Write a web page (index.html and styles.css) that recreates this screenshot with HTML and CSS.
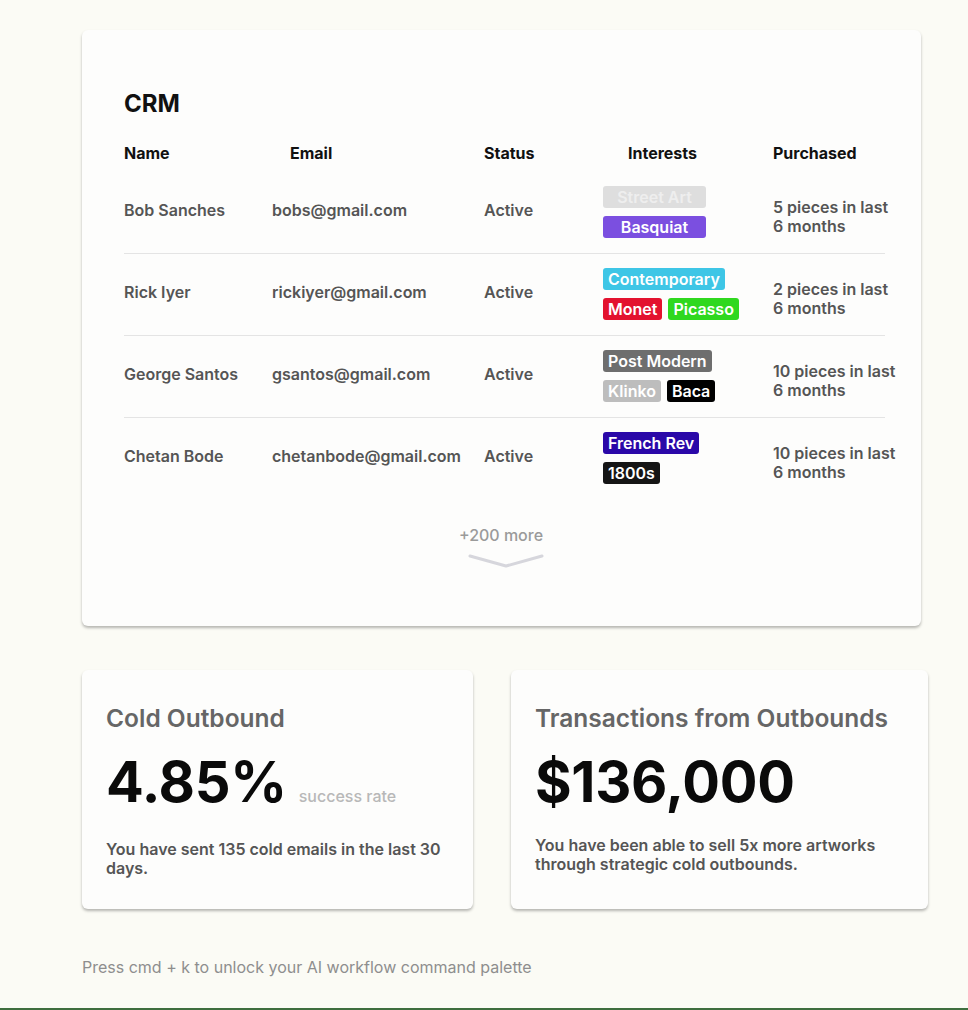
FILE: index.html
```html
<!DOCTYPE html>
<html lang="en">
<head>
<meta charset="utf-8">
<title>CRM</title>
<link rel="stylesheet" href="styles.css">
</head>
<body>
<div class="page">
  <main class="main">
    <section class="card crm">
      <h1 class="crm-title">CRM</h1>
      <div class="table">
        <div class="thead">
          <div class="th">Name</div>
          <div class="th th-email">Email</div>
          <div class="th">Status</div>
          <div class="th th-interests">Interests</div>
          <div class="th">Purchased</div>
        </div>
        <div class="row">
          <div class="cell">Bob Sanches</div>
          <div class="cell">bobs@gmail.com</div>
          <div class="cell">Active</div>
          <div class="cell tags">
            <span class="tag tag-wide t-faint">Street Art</span>
            <span class="tag tag-wide t-purple">Basquiat</span>
          </div>
          <div class="cell purchased">5 pieces in last 6 months</div>
        </div>
        <div class="row">
          <div class="cell">Rick Iyer</div>
          <div class="cell">rickiyer@gmail.com</div>
          <div class="cell">Active</div>
          <div class="cell tags">
            <span class="tag t-cyan">Contemporary</span>
            <span class="tag-line"><span class="tag t-red">Monet</span><span class="tag t-green">Picasso</span></span>
          </div>
          <div class="cell purchased">2 pieces in last 6 months</div>
        </div>
        <div class="row">
          <div class="cell">George Santos</div>
          <div class="cell">gsantos@gmail.com</div>
          <div class="cell">Active</div>
          <div class="cell tags">
            <span class="tag t-gray">Post Modern</span>
            <span class="tag-line"><span class="tag t-light">Klinko</span><span class="tag t-black">Baca</span></span>
          </div>
          <div class="cell purchased">10 pieces in last 6 months</div>
        </div>
        <div class="row row-last">
          <div class="cell">Chetan Bode</div>
          <div class="cell">chetanbode@gmail.com</div>
          <div class="cell">Active</div>
          <div class="cell tags">
            <span class="tag t-indigo">French Rev</span>
            <span class="tag t-dark">1800s</span>
          </div>
          <div class="cell purchased">10 pieces in last 6 months</div>
        </div>
      </div>
      <div class="more">+200 more</div>
      <svg class="chevron" width="76" height="16" viewBox="0 0 76 16" aria-hidden="true">
        <path d="M2 3 L38 13 L74 3" fill="none" stroke="#d6d6dc" stroke-width="3" stroke-linecap="round" stroke-linejoin="round"/>
      </svg>
    </section>

    <div class="stats">
      <section class="card stat stat-left">
        <h2 class="stat-title">Cold Outbound</h2>
        <div class="stat-value-row">
          <span class="stat-value">4.85%</span>
          <span class="stat-unit">success rate</span>
        </div>
        <p class="stat-text stat-text-left">You have sent 135 cold emails in the last 30 days.</p>
      </section>
      <section class="card stat stat-right">
        <h2 class="stat-title">Transactions from Outbounds</h2>
        <div class="stat-value-row">
          <span class="stat-value">$136,000</span>
        </div>
        <p class="stat-text">You have been able to sell 5x more artworks through strategic cold outbounds.</p>
      </section>
    </div>

    <p class="hint">Press cmd + k to unlock your AI workflow command palette</p>
  </main>
  <div class="bottom-bar"></div>
</div>
</body>
</html>
```

FILE: styles.css
```css
* { box-sizing: border-box; }

html, body {
  margin: 0;
  padding: 0;
  height: 100%;
}

body {
  background: #fbfbf5;
  font-family: Inter, "Noto Sans", "Liberation Sans", sans-serif;
  color: #555;
}

.page {
  min-height: 100%;
  display: flex;
  flex-direction: column;
}

.main {
  flex: 1;
  padding: 30px 0 0 82px;
}

.card {
  background: #fdfdfc;
  border-radius: 6px;
  box-shadow: 0 2px 3px rgba(0, 0, 0, 0.28);
}

/* CRM card */
.crm {
  width: 839px;
  height: 596px;
  padding: 59px 0 0 42px;
}

.crm-title {
  margin: 0;
  font-size: 24px;
  line-height: 30px;
  font-weight: 700;
  color: #111;
}

.table {
  width: 761px;
  margin-top: 24px;
}

.thead,
.row {
  display: grid;
  grid-template-columns: 148px 212px 119px 170px 128px;
}

.thead {
  height: 20px;
  margin-bottom: 9px;
}

.th {
  font-size: 16px;
  line-height: 20px;
  font-weight: 700;
  color: #111;
}

.th-email { padding-left: 18px; }
.th-interests { padding-left: 25px; }

.row {
  align-items: center;
  padding: 14px 0 15px;
  border-bottom: 1px solid #e4e4e4;
  width: 761px;
}

.row-last { border-bottom: none; }

.cell {
  font-size: 16px;
  line-height: 19px;
  font-weight: 600;
  color: #555;
  white-space: nowrap;
  margin-bottom: 3px;
}

.purchased {
  white-space: normal;
  width: 128px;
  margin: 10px 0 0;
}

.tags {
  display: flex;
  flex-direction: column;
  align-items: flex-start;
  gap: 8px;
  white-space: nowrap;
  margin-bottom: 0;
}

.tag-line {
  display: flex;
  gap: 6px;
}

.tag {
  display: inline-block;
  height: 22px;
  line-height: 22px;
  padding: 0 5px;
  border-radius: 3px;
  font-size: 16px;
  font-weight: 600;
  color: #fff;
}

.tag-wide {
  width: 103px;
  text-align: center;
}

.t-faint { background: #dedede; color: #eeeeee; }
.t-purple { background: #7b4fe0; }
.t-cyan { background: #3ec6e6; }
.t-red { background: #e3122f; }
.t-green { background: #2fd81f; }
.t-gray { background: #6e6e6e; }
.t-light { background: #bdbdbd; }
.t-black { background: #000; }
.t-indigo { background: #2a08a8; }
.t-dark { background: #151515; }

.more {
  margin-top: 26px;
  width: 754px;
  text-align: center;
  font-size: 16px;
  line-height: 20px;
  font-weight: 500;
  color: #9a9a9a;
}

.chevron {
  display: block;
  margin: 8px 0 0 344px;
}

/* Stats */
.stats {
  display: flex;
  gap: 38px;
  margin-top: 44px;
  align-items: flex-start;
}

.stat {
  height: 239px;
  padding: 34px 24px 0;
}

.stat-left { width: 391px; }
.stat-right { width: 417px; }

.stat-title {
  margin: 0;
  font-size: 24.5px;
  line-height: 28px;
  font-weight: 600;
  color: #666;
}

.stat-value-row {
  display: flex;
  align-items: baseline;
  gap: 12px;
  margin-top: 18px;
}

.stat-value {
  font-size: 56px;
  line-height: 64px;
  font-weight: 700;
  color: #0a0a0a;
  letter-spacing: -0.3px;
}

.stat-unit {
  font-size: 16px;
  font-weight: 500;
  color: #b8b8b8;
}

.stat-text {
  margin: 22px 0 0;
  font-size: 16px;
  line-height: 19px;
  font-weight: 600;
  color: #555;
}

.stat-text-left { margin-top: 26px; }

.hint {
  margin: 48px 0 0;
  font-size: 16px;
  line-height: 20px;
  color: #8e8e8e;
}

.bottom-bar {
  height: 2px;
  background: #3e6e3e;
}
```
